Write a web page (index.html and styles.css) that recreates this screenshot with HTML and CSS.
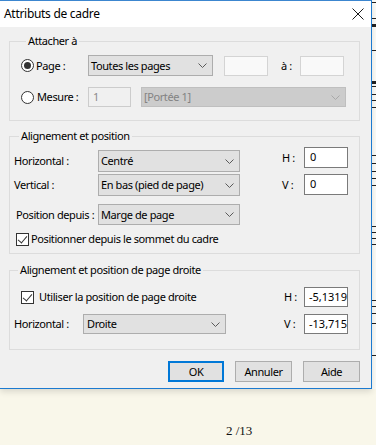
FILE: index.html
```html
<!DOCTYPE html>
<html lang="fr">
<head>
    <meta charset="UTF-8">
    <meta name="viewport" content="width=device-width, initial-scale=1.0">
    <title>Attributs de cadre</title>
    <link rel="stylesheet" href="styles.css">
</head>
<body>
    <div class="screen">
        <div class="top">
            <div class="dialog">
                <!-- Title bar -->
                <div class="titlebar">
                    <span class="title">Attributs de cadre</span>
                    <svg class="close" width="12" height="12" viewBox="0 0 12 12">
                        <path d="M0.5 0.5 L11.5 11.5 M11.5 0.5 L0.5 11.5" stroke="#1a1a1a" stroke-width="1" fill="none"/>
                    </svg>
                </div>

                <div class="dialog-body">
                    <!-- Attacher à -->
                    <fieldset class="group group-attach">
                        <legend>Attacher à</legend>
                        <div class="row row-page">
                            <span class="radio checked"></span>
                            <span class="lbl lbl-page">Page :</span>
                            <div class="select sel-pages">
                                <span>Toutes les pages</span>
                                <svg class="chev" width="9" height="5" viewBox="0 0 9 5"><path d="M0.5 0.5 L4.5 4.5 L8.5 0.5" stroke="#5a5a5a" fill="none"/></svg>
                            </div>
                            <div class="field field-soft"></div>
                            <span class="lbl lbl-to">à :</span>
                            <div class="field field-soft"></div>
                        </div>
                        <div class="row row-measure">
                            <span class="radio"></span>
                            <span class="lbl lbl-measure">Mesure :</span>
                            <div class="field field-disabled">1</div>
                            <div class="select select-disabled sel-staff">
                                <span>[Portée 1]</span>
                                <svg class="chev" width="9" height="5" viewBox="0 0 9 5"><path d="M0.5 0.5 L4.5 4.5 L8.5 0.5" stroke="#a8a8a8" fill="none"/></svg>
                            </div>
                        </div>
                    </fieldset>

                    <!-- Alignement et position -->
                    <fieldset class="group group-align">
                        <legend>Alignement et position</legend>
                        <div class="align-wrap">
                            <div class="align-left">
                                <div class="row row-h">
                                    <span class="lbl lbl-wide">Horizontal :</span>
                                    <div class="select sel-align">
                                        <span>Centré</span>
                                        <svg class="chev" width="9" height="5" viewBox="0 0 9 5"><path d="M0.5 0.5 L4.5 4.5 L8.5 0.5" stroke="#5a5a5a" fill="none"/></svg>
                                    </div>
                                </div>
                                <div class="row row-v">
                                    <span class="lbl lbl-wide">Vertical :</span>
                                    <div class="select sel-align">
                                        <span>En bas (pied de page)</span>
                                        <svg class="chev" width="9" height="5" viewBox="0 0 9 5"><path d="M0.5 0.5 L4.5 4.5 L8.5 0.5" stroke="#5a5a5a" fill="none"/></svg>
                                    </div>
                                </div>
                                <div class="row row-from">
                                    <span class="lbl lbl-wide lbl-from">Position depuis :</span>
                                    <div class="select sel-align sel-from">
                                        <span>Marge de page</span>
                                        <svg class="chev" width="9" height="5" viewBox="0 0 9 5"><path d="M0.5 0.5 L4.5 4.5 L8.5 0.5" stroke="#5a5a5a" fill="none"/></svg>
                                    </div>
                                </div>
                                <div class="row row-check">
                                    <span class="checkbox checked"></span>
                                    <span class="lbl">Positionner depuis le sommet du cadre</span>
                                </div>
                            </div>
                            <div class="align-right">
                                <div class="row row-offset">
                                    <span class="lbl lbl-axis">H :</span>
                                    <div class="field">0</div>
                                </div>
                                <div class="row row-offset">
                                    <span class="lbl lbl-axis">V :</span>
                                    <div class="field">0</div>
                                </div>
                            </div>
                        </div>
                    </fieldset>

                    <!-- Alignement et position de page droite -->
                    <fieldset class="group group-right">
                        <legend>Alignement et position de page droite</legend>
                        <div class="row row-between">
                            <div class="row row-use">
                                <span class="checkbox checked"></span>
                                <span class="lbl">Utiliser la position de page droite</span>
                            </div>
                            <div class="row row-offset">
                                <span class="lbl lbl-axis">H :</span>
                                <div class="field field-num">-5,1319</div>
                            </div>
                        </div>
                        <div class="row row-between row-second">
                            <div class="row">
                                <span class="lbl lbl-right">Horizontal :</span>
                                <div class="select sel-right">
                                    <span>Droite</span>
                                    <svg class="chev" width="9" height="5" viewBox="0 0 9 5"><path d="M0.5 0.5 L4.5 4.5 L8.5 0.5" stroke="#5a5a5a" fill="none"/></svg>
                                </div>
                            </div>
                            <div class="row row-offset">
                                <span class="lbl lbl-axis">V :</span>
                                <div class="field field-num">-13,715</div>
                            </div>
                        </div>
                    </fieldset>

                    <!-- Buttons -->
                    <div class="buttons">
                        <button class="btn btn-default">OK</button>
                        <button class="btn">Annuler</button>
                        <button class="btn">Aide</button>
                    </div>
                </div>
            </div>

            <!-- Edge of the score page behind the dialog -->
            <svg class="page-edge" width="4" height="389" viewBox="0 0 4 389">
                <rect width="4" height="389" fill="#fbfbf7"/>
                <g stroke="#222" stroke-width="1">
                    <path d="M0 2.5 H4 M0 18.5 H4 M0 50.5 H4 M0 86.5 H4 M0 94.5 H4 M0 100.5 H4 M0 107.5 H4 M0 155.5 H4 M0 163.5 H4 M0 171.5 H4 M0 178.5 H4 M0 185.5 H4 M0 226.5 H4 M0 232.5 H4 M0 238.5 H4 M0 244.5 H4 M0 300.5 H4 M0 306.5 H4 M0 313.5 H4 M0 323.5 H4 M0 355.5 H4"/>
                </g>
                <rect y="24" width="4" height="3" fill="#222"/>
                <rect y="81" width="4" height="3" fill="#222"/>
            </svg>
        </div>

        <div class="page-footer">2 /13</div>
    </div>
</body>
</html>
```

FILE: styles.css
```css
* {
    margin: 0;
    padding: 0;
    box-sizing: border-box;
}

body {
    font-family: 'Noto Sans', 'Liberation Sans', Arial, sans-serif;
    font-size: 11px;
    line-height: 16px;
    letter-spacing: -0.4px;
    color: #000;
    background: #f9f7ea;
    width: 376px;
    height: 445px;
    overflow: hidden;
}

.screen {
    display: flex;
    flex-direction: column;
    height: 445px;
}

.top {
    display: flex;
    align-items: flex-start;
}

.dialog {
    width: 372px;
    background: #f0f0f0;
    border-top: 1px solid #3c86cf;
    border-right: 1px solid #1c7ad0;
    border-bottom: 1px solid #1c7ad0;
    box-shadow: 0 3px 6px rgba(0, 0, 0, 0.12);
    position: relative;
    z-index: 1;
}

.titlebar {
    height: 26px;
    background: #fff;
    display: flex;
    align-items: center;
    justify-content: space-between;
    padding: 0 7px 0 4px;
}

.title {
    font-size: 12px;
    letter-spacing: -0.3px;
    color: #000;
}

.close {
    display: block;
}

.dialog-body {
    padding: 0 11px 6px 9px;
}

/* Group boxes */
.group {
    border: 1px solid #dcdcdc;
    min-width: 0;
}

.group legend {
    font-size: 11px;
    line-height: 16px;
    padding: 0 2px;
    margin-left: 5px;
}

.group-attach {
    margin-top: 6px;
    padding: 6px 0 13px 11px;
}

.group-align {
    margin-top: 7px;
    padding: 0 11px 6px 4px;
}

.group-right {
    margin-top: 8px;
    padding: 9px 11px 15px 3px;
}

.row {
    display: flex;
    align-items: center;
}

.lbl {
    white-space: nowrap;
}

/* Attacher à */
.row-page {
    height: 21px;
}

.row-measure {
    height: 20px;
    margin-top: 11px;
}

.lbl-page {
    width: 54px;
    padding-left: 2px;
}

.lbl-measure {
    width: 54px;
    padding-left: 3px;
}

.lbl-to {
    width: 32px;
    padding-left: 13px;
}

.sel-pages {
    width: 125px;
    height: 21px;
    margin-right: 11px;
}

.sel-staff {
    width: 205px;
    height: 20px;
    margin-left: 10px;
}

/* Controls */
.select {
    display: flex;
    align-items: center;
    justify-content: space-between;
    padding: 0 5px 0 2px;
    background: #e1e1e1;
    border: 1px solid #adadad;
    white-space: nowrap;
}

.select-disabled {
    background: #cccccc;
    border-color: #bfbfbf;
    color: #838383;
}

.chev {
    display: block;
    flex: none;
}

.field {
    width: 44px;
    height: 20px;
    background: #fff;
    border: 1px solid #7a7a7a;
    padding-left: 5px;
    line-height: 18px;
    white-space: nowrap;
    overflow: hidden;
}

.field-num {
    padding-left: 4px;
    letter-spacing: 0;
}

.field-soft {
    height: 20px;
    background: #f9f9f9;
    border-color: #d4d4d4;
}

.field-disabled {
    width: 43px;
    background: #f0f0f0;
    border-color: #cccccc;
    color: #8a8a8a;
    padding-left: 4px;
}

.radio {
    width: 13px;
    height: 13px;
    border: 1px solid #333;
    border-radius: 50%;
    background: #fff;
    display: flex;
    align-items: center;
    justify-content: center;
    flex: none;
}

.radio.checked::after {
    content: '';
    width: 7px;
    height: 7px;
    border-radius: 50%;
    background: #333;
}

.checkbox {
    width: 13px;
    height: 13px;
    border: 1px solid #333;
    background: #fff;
    flex: none;
    position: relative;
}

.checkbox.checked::after {
    content: '';
    position: absolute;
    left: 3px;
    top: 0px;
    width: 4px;
    height: 8px;
    border-right: 1px solid #333;
    border-bottom: 1px solid #333;
    transform: rotate(40deg);
}

/* Alignement et position */
.align-wrap {
    display: flex;
    justify-content: space-between;
    align-items: flex-start;
}

.align-left {
    margin-top: 6px;
}

.align-right {
    margin-top: 3px;
}

.lbl-wide {
    width: 84px;
}

.lbl-from {
    padding-left: 2px;
}

.sel-align {
    width: 142px;
    height: 22px;
}

.row-v {
    margin-top: 2px;
}

.row-from {
    margin-top: 8px;
}

.sel-from {
    height: 21px;
}

.row-check {
    margin-top: 6px;
    padding-left: 2px;
    gap: 2px;
}

.row-offset + .row-offset {
    margin-top: 6px;
}

.lbl-axis {
    width: 22px;
}

.align-right .field {
    height: 21px;
}

/* Page droite */
.row-between {
    justify-content: space-between;
    height: 20px;
}

.row-second {
    margin-top: 7px;
}

.row-use {
    padding-left: 8px;
    gap: 5px;
}

.lbl-right {
    width: 70px;
    padding-left: 1px;
}

.sel-right {
    width: 143px;
    height: 20px;
    padding-left: 3px;
}

.group-right .lbl-axis {
    width: 20px;
}

/* Buttons */
.buttons {
    display: flex;
    justify-content: flex-end;
    gap: 11px;
    margin-top: 11px;
}

.btn {
    width: 57px;
    height: 21px;
    font-family: inherit;
    font-size: 11px;
    letter-spacing: inherit;
    color: #000;
    background: #e1e1e1;
    border: 1px solid #adadad;
}

.btn-default {
    border: 2px solid #0078d7;
    width: 56px;
}

/* Page behind */
.page-edge {
    display: block;
    flex: none;
}

.page-footer {
    font-family: 'Liberation Serif', 'Times New Roman', serif;
    font-size: 13px;
    line-height: 16px;
    letter-spacing: 0;
    padding: 34px 0 0 226px;
    color: #111;
}
```
